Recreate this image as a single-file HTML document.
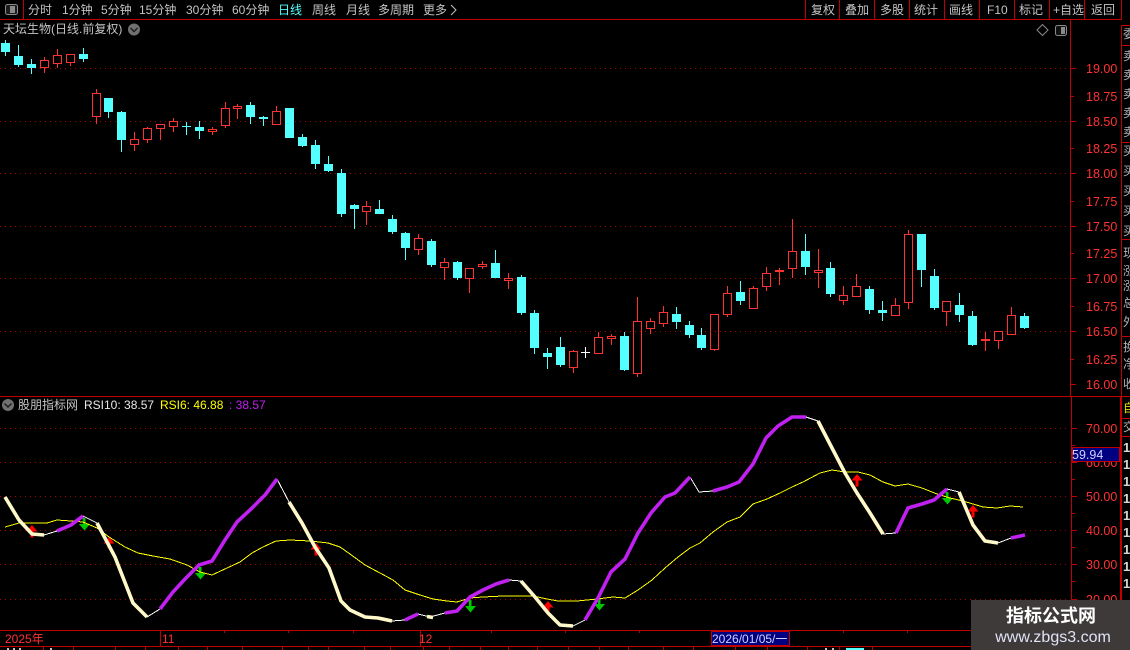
<!DOCTYPE html>
<html>
<head>
<meta charset="utf-8">
<title>K线图</title>
<style>
html,body{margin:0;padding:0;background:#000;width:1130px;height:650px;overflow:hidden}
svg{display:block}
text{font-family:"Liberation Sans","WenQuanYi Zen Hei","Noto Sans CJK SC",sans-serif;font-size:12px}
.g{fill:#c4c4c4}
.r{fill:#ff3232;font-size:12.5px}
.s{fill:#b4b4b4;font-size:12px}
.n{fill:#d8d8d8;font-size:13px;font-weight:bold}
.c{shape-rendering:crispEdges}
</style>
</head>
<body>
<svg width="1130" height="650" viewBox="0 0 1130 650" xmlns="http://www.w3.org/2000/svg">
<rect width="1130" height="650" fill="#000"/>

<!-- grid -->
<g class="c" stroke="#a80000" stroke-width="1" stroke-dasharray="1 4" fill="none">
<path d="M0 68.5H1068M0 121.5H1068M0 173.5H1068M0 226.5H1068M0 278.5H1068M0 331.5H1068"/>
<path d="M0 428.5H1068M0 462.5H1068M0 496.5H1068M0 530.5H1068M0 564.5H1068M0 599.5H1068"/>
</g>

<!-- frame lines -->
<g class="c" stroke="#c00000" stroke-width="1" fill="none">
<path d="M23.5 0V19M805.5 0V19M839.5 0V19M874.5 0V19M909.5 0V19M944.5 0V19M979.5 0V19M1014.5 0V19M1049.5 0V19M1084.5 0V19M1121.5 0V19"/>
<path d="M0 19.5H1122M0 396.5H1130M0 630.5H1070M0 646.5H1130"/>
<path d="M1070.5 19V396M1121.5 25V646"/>
<path d="M1122 25.5H1130M1122 45.5H1130M1122 142.5H1130M1122 239.5H1130M1122 336.5H1130M1122 418.5H1130M1122 436.5H1130"/>
<path d="M1071.5 396V646M1120.5 396V646"/>
<!-- price ticks -->
<path d="M1071 68.5h5M1071 96.5h3M1071 121.5h5M1071 148.5h3M1071 173.5h5M1071 201.5h3M1071 226.5h5M1071 253.5h3M1071 278.5h5M1071 306.5h3M1071 331.5h5M1071 359.5h3M1071 384.5h5"/>
<path d="M1072 428.5h5M1072 445.5h3M1072 462.5h5M1072 479.5h3M1072 496.5h5M1072 513.5h3M1072 530.5h5M1072 547.5h3M1072 564.5h5M1072 581.5h3M1072 599.5h5"/>
<!-- time axis -->
<path d="M160.5 631V646M420.5 631V646M224.5 631v2M288.5 631v2M353.5 631v2M491.5 631v2M565.5 631v2M639.5 631v2M843.5 631v2M907.5 631v2"/>
<path d="M43.5 647v3M73.5 647v3M115.5 647v3M145.5 647v3M178.5 647v3M207.5 647v3M242.5 647v3M282.5 647v3M308.5 647v3M328.5 647v3M364.5 647v3M390.5 647v3M423.5 647v3M449.5 647v3M480.5 647v3M508.5 647v3M537.5 647v3M568.5 647v3M599.5 647v3M628.5 647v3M663.5 647v3M693.5 647v3M735.5 647v3M767.5 647v3M807.5 647v3M839.5 647v3M872.5 647v3"/>
</g>

<!-- cyan candles -->
<g class="c">
<path fill="none" stroke="#54ffff" stroke-width="1" d="M5.5 40V56M18.5 45V67M31.5 59V74M83.5 48V62M108.5 98V118M121.5 111V152M186.5 122V135M199.5 121V139M250.5 102V124M263.5 116V126M289.5 108V138M302.5 134V147M315.5 140V169M328.5 156V172M341.5 169V217M354.5 204V229M379.5 200V214M392.5 215V234M405.5 232V260M431.5 239V267M457.5 261V280M495.5 250V278M521.5 275V315M534.5 310V354M547.5 348V369M560.5 337V367M624.5 332V371M676.5 307V329M689.5 321V338M701.5 328V350M740.5 281V305M805.5 234V275M830.5 262V297M869.5 286V314M882.5 301V321M921.5 234V287M934.5 269V310M959.5 293V322M972.5 311V346M1024.5 313V329"/>
<path fill="#54ffff" d="M1 43h9V52h-9zM14 56h9V65h-9zM27 64h9V68h-9zM79 54h9V59h-9zM104 98h9V112h-9zM117 112h9V140h-9zM182 126h9V127h-9zM195 127h9V131h-9zM246 105h9V117h-9zM259 117h9V119h-9zM285 108h9V138h-9zM298 137h9V146h-9zM311 145h9V164h-9zM324 164h9V171h-9zM337 173h9V214h-9zM350 205h9V209h-9zM375 209h9V214h-9zM388 219h9V232h-9zM401 233h9V248h-9zM427 241h9V265h-9zM453 262h9V278h-9zM491 263h9V278h-9zM517 277h9V313h-9zM530 313h9V348h-9zM543 353h9V357h-9zM556 347h9V365h-9zM620 336h9V370h-9zM672 314h9V322h-9zM685 325h9V335h-9zM697 335h9V348h-9zM736 292h9V301h-9zM801 251h9V267h-9zM826 268h9V294h-9zM865 289h9V310h-9zM878 310h9V313h-9zM917 234h9V270h-9zM930 276h9V308h-9zM955 305h9V315h-9zM968 316h9V345h-9zM1020 316h9V328h-9z"/>
<!-- red candles -->
<path fill="none" stroke="#ff3232" stroke-width="1" d="M44.5 57V60M40.5 60.5h8V67.5h-8zM44.5 68V73
M57.5 49V55M53.5 55.5h8V63.5h-8zM57.5 64V68
M66.5 54.5h8V62.5h-8zM70.5 63V66
M96.5 89V93M92.5 93.5h8V116.5h-8zM96.5 117V124
M134.5 132V139M130.5 139.5h8V144.5h-8zM134.5 145V151
M147.5 127V128M143.5 128.5h8V139.5h-8zM147.5 140V143
M156.5 124.5h8V128.5h-8zM160.5 129V140
M173.5 118V121M169.5 121.5h8V126.5h-8zM173.5 127V132
M212.5 127V129M208.5 129.5h8V131.5h-8zM212.5 132V135
M225.5 102V108M221.5 108.5h8V125.5h-8zM225.5 126V128
M237.5 104V106M233.5 106.5h8V108.5h-8zM237.5 109V119
M276.5 106V111M272.5 111.5h8V124.5h-8z
M366.5 201V206M362.5 206.5h8V211.5h-8zM366.5 212V225
M418.5 234V238M414.5 238.5h8V249.5h-8zM418.5 250V255
M444.5 258V262M440.5 262.5h8V267.5h-8zM444.5 268V280
M465.5 268.5h8V278.5h-8zM469.5 279V293
M482.5 261V264M478.5 264.5h8V266.5h-8zM482.5 267V269
M508.5 273V278M504.5 278.5h8V280.5h-8zM508.5 281V289
M573.5 350V351M569.5 351.5h8V367.5h-8zM573.5 368V373
M598.5 332V337M594.5 337.5h8V353.5h-8z
M611.5 334V336M607.5 336.5h8V338.5h-8zM611.5 339V345
M637.5 297V321M633.5 321.5h8V373.5h-8zM637.5 374V377
M650.5 318V321M646.5 321.5h8V328.5h-8zM650.5 329V334
M663.5 306V312M659.5 312.5h8V323.5h-8zM663.5 324V327
M710.5 314.5h8V349.5h-8zM714.5 350V351
M727.5 286V293M723.5 293.5h8V314.5h-8zM727.5 315V317
M753.5 286V288M749.5 288.5h8V308.5h-8z
M766.5 267V273M762.5 273.5h8V286.5h-8zM766.5 287V291
M779.5 268V270M775.5 270.5h8V271.5h-8zM779.5 272V285
M792.5 219V251M788.5 251.5h8V268.5h-8zM792.5 269V278
M818.5 249V270M814.5 270.5h8V272.5h-8zM818.5 273V288
M843.5 286V295M839.5 295.5h8V300.5h-8zM843.5 301V305
M856.5 274V286M852.5 286.5h8V296.5h-8z
M895.5 298V305M891.5 305.5h8V315.5h-8z
M908.5 230V234M904.5 234.5h8V302.5h-8zM908.5 303V309
M942.5 301.5h8V311.5h-8zM946.5 312V326
M985.5 332V339M981.5 339.5h8V340.5h-8zM985.5 341V351
M994.5 331.5h8V340.5h-8zM998.5 341V349
M1011.5 307V315M1007.5 315.5h8V334.5h-8z"/>
<!-- white doji -->
<path fill="none" stroke="#fff" stroke-width="1" d="M585.5 347V358M581 352.5h9"/>
</g>

<!-- arrows: red up -->
<g fill="#ff0000">
<path d="M32 525l5.5 6.5h-4v6h-3v-6h-4z"/>
<path d="M109 537l5.5 6.5h-4v5h-3v-5h-4z"/>
<path d="M316 543l5.5 6.5h-4v6h-3v-6h-4z"/>
<path d="M548 601l5.5 6.5h-4v5h-3v-5h-4z"/>
<path d="M857 474l5.5 6.5h-4v6h-3v-6h-4z"/>
<path d="M973 505l5.5 6.5h-4v6h-3v-6h-4z"/>
</g>
<!-- arrows: green down -->
<g fill="#00c800">
<path d="M82.5 518h3v6h4.5l-5.5 6.5-5.5-6.5h4z"/>
<path d="M198.5 567h3v6h4.5l-5.5 6.5-5.5-6.5h4z"/>
<path d="M468.5 600h3v6h4.5l-5.5 6.5-5.5-6.5h4z"/>
<path d="M597.5 598h3v6h4.5l-5.5 6.5-5.5-6.5h4z"/>
<path d="M945.5 492h3v6h4.5l-5.5 6.5-5.5-6.5h4z"/>
</g>

<!-- yellow line -->
<polyline class="c" fill="none" stroke="#ffff00" stroke-width="1" points="5,527 19,523 32,523 47,523 57,520 71,521 83,522 97,528 109,537 125,547 138,553 153,556 170,559 187,565 200,572 212,575 227,568 240,562 252,553 263,547 276,541 290,540 310,541 328,543 340,547 350,554 365,565 380,573 393,580 405,590 420,595 433,599 447,601 457,602 470,598 483,597 503,596 533,596 547,599 558,601 577,601 597,599 613,597 625,598 638,590 652,580 665,568 678,557 690,548 700,543 713,532 727,522 740,517 753,504 767,499 780,493 792,487 803,482 820,473 832,470 845,472 858,472 870,475 883,482 895,486 908,484 922,488 937,494 950,498 963,501 983,507 997,508 1010,506 1023,507"/>

<!-- RSI main line: thin white connectors -->
<g class="c" fill="none" stroke="#ffffff" stroke-width="1">
<polyline points="44,535 57,531"/>
<polyline points="83,516 97,523"/>
<polyline points="147,617 160,609"/>
<polyline points="277,479 289,502"/>
<polyline points="392,621 405,620"/>
<polyline points="418,614 430,617 445,613"/>
<polyline points="509,580 521,581"/>
<polyline points="573,626 585,620"/>
<polyline points="690,477 699,492 713,491"/>
<polyline points="806,417 818,421"/>
<polyline points="883,534 896,533"/>
<polyline points="947,489 959,492"/>
<polyline points="998,543 1011,538"/>
</g>
<!-- cream thick -->
<g fill="none" stroke="#fff8c8" stroke-width="3.6" stroke-linejoin="round">
<polyline points="5,497 19,520 32,534 44,535"/>
<polyline points="97,523 115,557 133,603 147,617"/>
<polyline points="289,502 302,523 315,547 329,568 341,601 350,610 365,617 378,618 392,621"/>
<polyline points="427,616.5 433,617.5"/>
<polyline points="521,581 535,597 548,613 560,625 573,626"/>
<polyline points="818,421 832,448 845,473 857,493 870,513 883,534"/>
<polyline points="959,492 973,525 985,541 998,543"/>
</g>
<!-- purple thick -->
<g fill="none" stroke="#c020f0" stroke-width="3.6" stroke-linejoin="round">
<polyline points="57,531 71,525 83,516"/>
<polyline points="160,609 173,592 186,578 199,565 212,561 225,540 237,522 251,509 265,495 277,479"/>
<polyline points="405,620 418,614"/>
<polyline points="445,613 457,611 470,597 483,590 496,584 509,580"/>
<polyline points="585,620 598,598 611,572 625,559 638,533 651,513 665,497 675,493 690,477"/>
<polyline points="713,491 727,487 739,482 753,464 766,438 778,426 792,417 806,417"/>
<polyline points="896,533 908,508 922,504 934,500 947,489"/>
<polyline points="1011,538 1025,535"/>
</g>

<!-- top toolbar -->
<rect x="5.5" y="4.5" width="12" height="10" rx="2" fill="#1c1c1c" stroke="#8a8a8a"/>
<rect x="10" y="6" width="5" height="7" fill="#8a8a8a"/>
<text class="g" x="28" y="14">分时</text>
<text class="g" x="62" y="14">1分钟</text>
<text class="g" x="101" y="14">5分钟</text>
<text class="g" x="139" y="14">15分钟</text>
<text class="g" x="186" y="14">30分钟</text>
<text class="g" x="232" y="14">60分钟</text>
<text x="278" y="14" fill="#54ffff">日线</text>
<text class="g" x="312" y="14">周线</text>
<text class="g" x="346" y="14">月线</text>
<text class="g" x="378" y="14">多周期</text>
<text class="g" x="423" y="14">更多</text>
<path d="M451 5l5 5-5 5" fill="none" stroke="#c4c4c4"/>

<text class="g" x="811" y="14">复权</text>
<text class="g" x="845" y="14">叠加</text>
<text class="g" x="880" y="14">多股</text>
<text class="g" x="914" y="14">统计</text>
<text class="g" x="949" y="14">画线</text>
<text class="g" x="987" y="14">F10</text>
<text class="g" x="1019" y="14">标记</text>
<text class="g" x="1053" y="14">+自选</text>
<text class="g" x="1091" y="14">返回</text>

<!-- title row -->
<text class="g" x="3" y="33">天坛生物(日线.前复权)</text>
<circle cx="134" cy="29.5" r="6" fill="#707070"/>
<path d="M130.5 28l3.5 3.5 3.5-3.5" fill="none" stroke="#1a1a1a" stroke-width="1.4"/>
<path d="M1042.5 24.5l5.5 5.5-5.5 5.5-5.5-5.5z" fill="none" stroke="#8a8a8a"/>
<rect x="1055.5" y="25.5" width="11" height="10" rx="2" fill="#111" stroke="#8a8a8a"/>
<rect x="1061" y="27" width="4" height="7" fill="#8a8a8a"/>

<!-- price labels -->
<text class="r" x="1086" y="73">19.00</text>
<text class="r" x="1086" y="101">18.75</text>
<text class="r" x="1086" y="126">18.50</text>
<text class="r" x="1086" y="153">18.25</text>
<text class="r" x="1086" y="178">18.00</text>
<text class="r" x="1086" y="206">17.75</text>
<text class="r" x="1086" y="231">17.50</text>
<text class="r" x="1086" y="258">17.25</text>
<text class="r" x="1086" y="283">17.00</text>
<text class="r" x="1086" y="311">16.75</text>
<text class="r" x="1086" y="336">16.50</text>
<text class="r" x="1086" y="364">16.25</text>
<text class="r" x="1086" y="389">16.00</text>

<text class="r" x="1086" y="433">70.00</text>
<text class="r" x="1086" y="467">60.00</text>
<text class="r" x="1086" y="501">50.00</text>
<text class="r" x="1086" y="535">40.00</text>
<text class="r" x="1086" y="569">30.00</text>
<text class="r" x="1086" y="604">20.00</text>

<rect class="c" x="1072.5" y="447.5" width="47" height="14" fill="#000080" stroke="#c00000"/>
<text x="1072" y="459" fill="#d0d0ff" style="font-size:12.5px">59.94</text>

<!-- indicator header -->
<circle cx="8" cy="405" r="6" fill="#707070"/>
<path d="M4.5 403.5l3.5 3.5 3.5-3.5" fill="none" stroke="#1a1a1a" stroke-width="1.4"/>
<text class="g" x="18" y="409">股朋指标网</text>
<text x="84" y="409" fill="#e8e8e8">RSI10: 38.57</text>
<text x="160" y="409" fill="#ffff00">RSI6: 46.88</text>
<text x="229" y="409" fill="#c020f0">: 38.57</text>

<!-- time labels -->
<text x="5" y="643" fill="#ff3232">2025年</text>
<text x="162" y="643" fill="#ff3232">11</text>
<text x="419" y="643" fill="#ff3232">12</text>
<rect class="c" x="711.5" y="631.5" width="78" height="14" fill="#000080" stroke="#c00000"/>
<text x="712" y="643" fill="#d0d0ff">2026/01/05/一</text>

<!-- bottom partial text -->
<g class="c" fill="#c4c4c4">
<rect x="7" y="648" width="2" height="2"/><rect x="13" y="648" width="2" height="2"/><rect x="19" y="648" width="2" height="2"/><rect x="50" y="648" width="2" height="2"/>
<rect x="825" y="648" width="2" height="2"/><rect x="832" y="648" width="2" height="2"/>
</g>
<rect class="c" x="846" y="648" width="18" height="2" fill="#54ffff"/>

<!-- right strip -->
<text class="s" x="1123" y="38">委</text>
<text class="s" x="1123" y="60">卖</text>
<text class="s" x="1123" y="79">卖</text>
<text class="s" x="1123" y="98">卖</text>
<text class="s" x="1123" y="117">卖</text>
<text class="s" x="1123" y="136">卖</text>
<text class="s" x="1123" y="155">买</text>
<text class="s" x="1123" y="175">买</text>
<text class="s" x="1123" y="195">买</text>
<text class="s" x="1123" y="215">买</text>
<text class="s" x="1123" y="235">买</text>
<text class="s" x="1123" y="257">现</text>
<text class="s" x="1123" y="275">涨</text>
<text class="s" x="1123" y="290">涨</text>
<text class="s" x="1123" y="307">总</text>
<text class="s" x="1123" y="326">外</text>
<text class="s" x="1123" y="351">换</text>
<text class="s" x="1123" y="368">净</text>
<text class="s" x="1123" y="388">收</text>
<text x="1123" y="412" fill="#e0e000">自</text>
<text class="s" x="1123" y="431">交</text>
<text class="n" x="1123" y="452">1</text>
<text class="n" x="1123" y="469">1</text>
<text class="n" x="1123" y="486">1</text>
<text class="n" x="1123" y="503">1</text>
<text class="n" x="1123" y="520">1</text>
<text class="n" x="1123" y="537">1</text>
<text class="n" x="1123" y="554">1</text>
<text class="n" x="1123" y="571">1</text>
<text class="n" x="1123" y="588">1</text>

<!-- watermark -->
<rect x="971" y="600" width="159" height="50" fill="#3f3a3a"/>
<text x="1051" y="622" text-anchor="middle" fill="#ffffff" style="font-size:18px;font-weight:bold">指标公式网</text>
<text x="1053" y="642" text-anchor="middle" fill="#dfe3f5" style="font-size:16px">www.zbgs3.com</text>
</svg>
</body>
</html>
